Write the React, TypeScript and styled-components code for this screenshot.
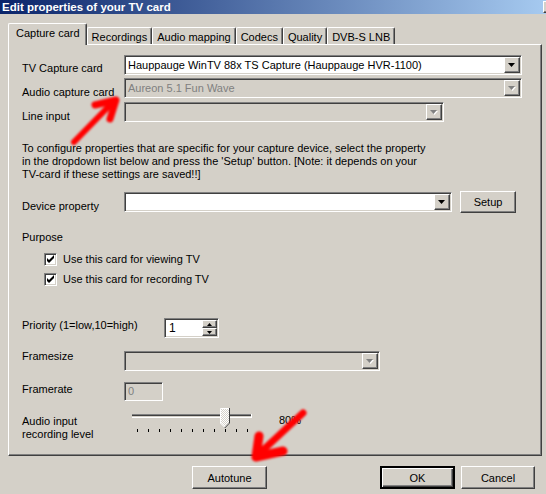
import styled, { createGlobalStyle, css } from 'styled-components'

const GlobalStyle = createGlobalStyle`
  html, body {
    margin: 0;
    padding: 0;
    background: #d4d0c8;
  }
  body {
    font-family: "Liberation Sans", Arial, sans-serif;
    font-size: 11px;
    color: #000;
  }
`

const face = '#d4d0c8'

const sunken = css`
  box-sizing: border-box;
  border: 1px solid;
  border-color: #808080 #fff #fff #808080;
  box-shadow: inset 1px 1px #404040, inset -1px -1px ${face};
`

const raised = css`
  box-sizing: border-box;
  border: 1px solid;
  border-color: #fff #404040 #404040 #fff;
  box-shadow: inset -1px -1px #808080;
  background: ${face};
`

const Window = styled.div`
  position: relative;
  width: 546px;
  height: 494px;
  overflow: hidden;
  background: ${face};
`

const TitleBar = styled.div`
  display: flex;
  justify-content: space-between;
  align-items: center;
  height: 14px;
  padding-left: 2px;
  background: linear-gradient(to right, #0a246a, #a6caf0);
  color: #fff;
  font-weight: bold;
  font-size: 11.5px;
  line-height: 14px;
  white-space: nowrap;
`

const CloseBox = styled.span`
  ${raised}
  width: 16px;
  height: 12px;
  margin-right: -13px;
`

const Body = styled.div`
  padding: 9px 4px 0 8px;
`

const TabStrip = styled.div`
  display: flex;
  align-items: flex-end;
  height: 21px;
`

const Tab = styled.div<{ $active?: boolean }>`
  box-sizing: border-box;
  position: relative;
  border: 1px solid;
  border-color: #fff #404040 transparent #fff;
  border-bottom: none;
  border-radius: 2px 2px 0 0;
  box-shadow: inset -1px 0 #808080;
  white-space: nowrap;
  ${p =>
    p.$active
      ? css`
          z-index: 1;
          height: 22px;
          margin-bottom: -1px;
          padding: 2px 6px 0 7px;
          line-height: 14px;
          background: ${face};
        `
      : css`
          height: 17px;
          padding: 2px 4px 0 4px;
          line-height: 14px;
        `}
`

const Panel = styled.div`
  box-sizing: border-box;
  width: 534px;
  height: 412px;
  border: 1px solid;
  border-color: #fff #404040 #404040 #fff;
  box-shadow: inset -1px -1px #808080;
  padding: 0 0 0 13px;
`

const Row = styled.div<{ $top: number; $h: number }>`
  display: flex;
  align-items: flex-start;
  margin-top: ${p => p.$top}px;
  height: ${p => p.$h}px;
`

const Label = styled.div<{ $w?: number; $dy?: number }>`
  flex: none;
  width: ${p => p.$w ?? 102}px;
  margin-top: ${p => p.$dy ?? 0}px;
  line-height: 13px;
  white-space: nowrap;
`

const Combo = styled.div<{ $w: number; $disabled?: boolean; $dy?: number }>`
  ${sunken}
  display: flex;
  align-items: center;
  flex: none;
  width: ${p => p.$w}px;
  height: 20px;
  padding: 1px;
  margin-top: ${p => p.$dy ?? 0}px;
  background: ${p => (p.$disabled ? face : '#fff')};
`

const ComboText = styled.span<{ $disabled?: boolean }>`
  flex: 1;
  padding-left: 2px;
  line-height: 16px;
  white-space: nowrap;
  overflow: hidden;
  color: ${p => (p.$disabled ? '#808080' : '#000')};
`

const DropButton = styled.span`
  ${raised}
  display: flex;
  align-items: center;
  justify-content: center;
  flex: none;
  width: 16px;
  height: 16px;
`

const Button = styled.div<{ $w: number; $h?: number; $default?: boolean }>`
  ${raised}
  display: flex;
  align-items: center;
  justify-content: center;
  flex: none;
  width: ${p => p.$w}px;
  height: ${p => p.$h ?? 23}px;
  ${p =>
    p.$default &&
    css`
      border: 2px solid;
      border-color: #000;
      box-shadow: inset 1px 1px #fff, inset -1px -1px #404040, inset -2px -2px #808080;
    `}
`

const Note = styled.p`
  margin: 20px 0 0;
  line-height: 13px;
  white-space: nowrap;
`

const CheckRow = styled.label<{ $top: number }>`
  display: flex;
  align-items: center;
  gap: 6px;
  margin: ${p => p.$top}px 0 0 22px;
  height: 13px;
  line-height: 13px;
`

const CheckBox = styled.span`
  ${sunken}
  display: flex;
  align-items: center;
  justify-content: center;
  width: 13px;
  height: 13px;
  background: #fff;
`

const Spin = styled.div`
  ${sunken}
  display: flex;
  width: 55px;
  height: 20px;
  padding: 1px;
  background: #fff;
`

const SpinText = styled.span`
  flex: 1;
  padding-left: 3px;
  line-height: 16px;
  font-size: 12px;
`

const SpinButtons = styled.div`
  display: flex;
  flex-direction: column;
  width: 15px;
`

const SpinButton = styled.span`
  ${raised}
  display: flex;
  align-items: center;
  justify-content: center;
  height: 8px;
`

const Edit = styled.div<{ $w: number }>`
  ${sunken}
  width: ${p => p.$w}px;
  height: 19px;
  padding: 1px 3px;
  color: #808080;
  line-height: 15px;
`

const Percent = styled.span`
  margin: 6px 0 0 25px;
  line-height: 13px;
`

const ButtonRow = styled.div`
  display: flex;
  margin-top: 10px;
  padding: 0 7px 0 184px;
`

const Spacer = styled.div`
  flex: 1;
`

const Overlay = styled.svg`
  position: absolute;
  left: 0;
  top: 0;
  pointer-events: none;
`

const DownArrow = ({ disabled }: { disabled?: boolean }) => (
  <svg width="8" height="5" viewBox="0 0 8 5">
    {disabled && <polygon points="1,1 8,1 4.5,5" fill="#fff" />}
    <polygon points="0,0 7,0 3.5,4" fill={disabled ? '#808080' : '#000'} />
  </svg>
)

const Tick = () => (
  <svg width="9" height="9" viewBox="0 0 9 9">
    <path d="M1,3 L3,5 L8,0 L8,3 L3,8 L1,6 Z" fill="#000" />
  </svg>
)

const SmallArrow = ({ up }: { up?: boolean }) => (
  <svg width="5" height="3" viewBox="0 0 5 3">
    <polygon points={up ? '2.5,0 5,3 0,3' : '0,0 5,0 2.5,3'} fill="#000" />
  </svg>
)

const Slider = () => (
  <svg width="130" height="27" viewBox="0 0 130 27">
    <defs>
      <pattern id="dither" width="2" height="2" patternUnits="userSpaceOnUse">
        <rect width="2" height="2" fill="#fff" />
        <rect width="1" height="1" fill={face} />
        <rect x="1" y="1" width="1" height="1" fill={face} />
      </pattern>
    </defs>
    <rect x="8" y="6" width="120" height="1" fill="#808080" />
    <rect x="8" y="7" width="120" height="1" fill="#404040" />
    <rect x="8" y="8" width="120" height="1" fill={face} />
    <rect x="8" y="9" width="120" height="1" fill="#fff" />
    <rect x="127" y="6" width="1" height="4" fill="#fff" />
    <path d="M96,0.5 H105.5 V15 L100.75,19.5 L96,15 Z" fill="url(#dither)" />
    <path d="M96.5,15 V0.5 H105" stroke="#fff" fill="none" />
    <path d="M105.5,0 V15 L100.75,20" stroke="#404040" fill="none" />
    <path d="M96.5,15 L100.5,19" stroke="#fff" fill="none" />
    {Array.from({ length: 11 }, (_, i) => (
      <rect key={i} x={13 + 11 * i} y={21} width="1" height="3" fill="#000" />
    ))}
  </svg>
)

export default function App() {
  return (
    <Window>
      <GlobalStyle />
      <TitleBar>
        <span>Edit properties of your TV card</span>
        <CloseBox />
      </TitleBar>
      <Body>
        <TabStrip>
          <Tab $active>Capture card</Tab>
          <Tab>Recordings</Tab>
          <Tab>Audio mapping</Tab>
          <Tab>Codecs</Tab>
          <Tab>Quality</Tab>
          <Tab>DVB-S LNB</Tab>
        </TabStrip>
        <Panel>
          <Row $top={10} $h={20}>
            <Label $dy={7}>TV Capture card</Label>
            <Combo $w={398}>
              <ComboText>Hauppauge WinTV 88x TS Capture (Hauppauge HVR-1100)</ComboText>
              <DropButton>
                <DownArrow />
              </DropButton>
            </Combo>
          </Row>
          <Row $top={3} $h={20}>
            <Label $dy={8}>Audio capture card</Label>
            <Combo $w={398} $disabled>
              <ComboText $disabled>Aureon 5.1 Fun Wave</ComboText>
              <DropButton>
                <DownArrow disabled />
              </DropButton>
            </Combo>
          </Row>
          <Row $top={4} $h={20}>
            <Label $dy={8}>Line input</Label>
            <Combo $w={320} $disabled>
              <ComboText $disabled />
              <DropButton>
                <DownArrow disabled />
              </DropButton>
            </Combo>
          </Row>
          <Note>
            To configure properties that are specific for your capture device, select the property
            <br />
            in the dropdown list below and press the 'Setup' button. [Note: it depends on your
            <br />
            TV-card if these settings are saved!!]
          </Note>
          <Row $top={10} $h={22}>
            <Label $dy={9}>Device property</Label>
            <Combo $w={328} $dy={1}>
              <ComboText />
              <DropButton>
                <DownArrow />
              </DropButton>
            </Combo>
            <Button $w={56} $h={22} style={{ marginLeft: 8 }}>
              Setup
            </Button>
          </Row>
          <Row $top={18} $h={13}>
            <Label>Purpose</Label>
          </Row>
          <CheckRow $top={9}>
            <CheckBox>
              <Tick />
            </CheckBox>
            Use this card for viewing TV
          </CheckRow>
          <CheckRow $top={7}>
            <CheckBox>
              <Tick />
            </CheckBox>
            Use this card for recording TV
          </CheckRow>
          <Row $top={32} $h={20}>
            <Label $w={142} $dy={1}>
              Priority (1=low,10=high)
            </Label>
            <Spin>
              <SpinText>1</SpinText>
              <SpinButtons>
                <SpinButton>
                  <SmallArrow up />
                </SpinButton>
                <SpinButton>
                  <SmallArrow />
                </SpinButton>
              </SpinButtons>
            </Spin>
          </Row>
          <Row $top={13} $h={20}>
            <Label $dy={-1}>Framesize</Label>
            <Combo $w={256} $disabled>
              <ComboText $disabled />
              <DropButton>
                <DownArrow disabled />
              </DropButton>
            </Combo>
          </Row>
          <Row $top={11} $h={19}>
            <Label $dy={1}>Framerate</Label>
            <Edit $w={39}>0</Edit>
          </Row>
          <Row $top={7} $h={27}>
            <Label $dy={7}>
              Audio input
              <br />
              recording level
            </Label>
            <Slider />
            <Percent>80%</Percent>
          </Row>
        </Panel>
        <ButtonRow>
          <Button $w={75}>Autotune</Button>
          <Spacer />
          <Button $w={75} $default>
            OK
          </Button>
          <Button $w={74} style={{ marginLeft: 6 }}>
            Cancel
          </Button>
        </ButtonRow>
      </Body>
      <Overlay width="546" height="494" viewBox="0 0 546 494">
        <defs>
          <filter id="soft" x="-20%" y="-20%" width="140%" height="140%">
            <feGaussianBlur stdDeviation="0.9" />
          </filter>
        </defs>
        <g stroke="#ff0000" fill="none" strokeLinecap="round" strokeLinejoin="round" filter="url(#soft)">
          <path d="M74,142 L113,102" strokeWidth="6" />
          <path d="M95,105 L116,100 L110,119" strokeWidth="7" />
          <path d="M303,413 L262,451" strokeWidth="7" />
          <path d="M259,436 L256,457 L283,451" strokeWidth="9" />
        </g>
      </Overlay>
    </Window>
  )
}
